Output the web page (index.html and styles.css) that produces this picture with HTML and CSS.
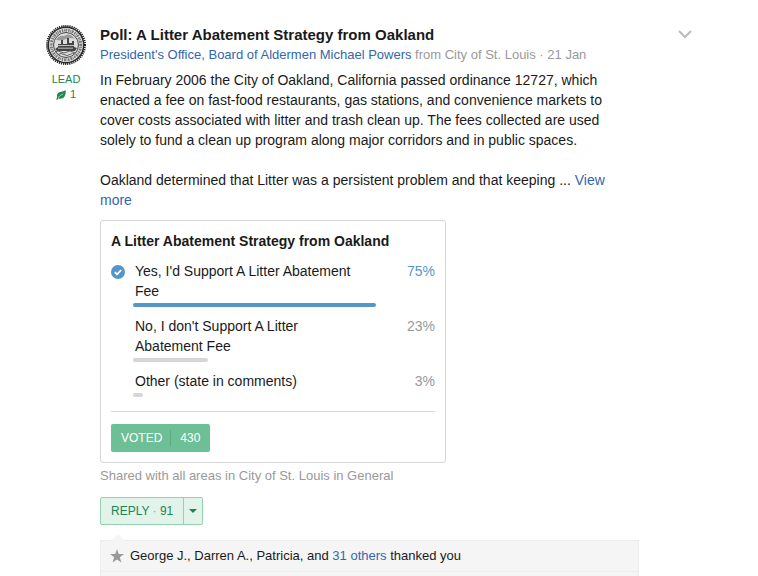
FILE: index.html
```html
<!DOCTYPE html>
<html lang="en">
<head>
<meta charset="utf-8">
<meta name="viewport" content="width=device-width, initial-scale=1">
<title>Poll: A Litter Abatement Strategy from Oakland</title>
<link rel="stylesheet" href="styles.css">
</head>
<body>
<article class="post">
  <aside class="author">
    <svg class="seal" viewBox="0 0 40 40" aria-hidden="true">
      <circle cx="20" cy="20" r="18.500" fill="#2a2a2a"/>
      <circle cx="20" cy="20" r="19" fill="none" stroke="#222" stroke-width="2" stroke-dasharray="1.2 .9"/>
      <circle cx="20" cy="20" r="17" fill="#eee"/>
      <circle cx="20" cy="20" r="14.800" fill="none" stroke="#777" stroke-width="3" stroke-dasharray="1.5 .7 .9 .6 1.900 .9"/>
      <circle cx="20" cy="20" r="12.500" fill="#dcdcdc" stroke="#444" stroke-width="1"/>
      <path d="M10 15q3-5 8-4 5-3 8 0l3 3q-5-2-9 0t-10 1z" fill="#999"/>
      <path d="M9 24l3-2v-3h3v-4h2v4h4v-6h2v5h3v-2h2v6l3 1-2 3H11z" fill="#444"/>
      <path d="M12 20.500h16M12 23.200h15" stroke="#ddd" stroke-width=".8"/>
      <path d="M9 27q3-2 6 0t6 0 6 0 4-1M12 29.500q3-2 6 0t6 0 4-1" fill="none" stroke="#666" stroke-width="1"/>
    </svg>
    <span class="role">LEAD</span>
    <span class="count">
      <svg class="leaf" viewBox="0 0 10 10" aria-hidden="true">
        <path d="M.5 9.500L2 8" stroke="#1f8452" stroke-width="1.2"/>
        <path d="M1.200 8Q0 3 4.200 1.900Q7.500 1.500 9.800.2Q10.200 8.400 4 8.700Q2.600 8.800 1.200 8z" fill="#1f8452"/>
        <path d="M2 7.800Q4 5.200 7.200 3.900" fill="none" stroke="#fff" stroke-width=".6"/>
      </svg>1</span>
  </aside>
  <div class="content">
    <header class="head">
      <div>
        <h1 class="title">Poll: A Litter Abatement Strategy from Oakland</h1>
        <p class="byline"><a href="#">President's Office, Board of Aldermen Michael Powers</a> from City of St. Louis · 21 Jan</p>
      </div>
      <button class="menu" type="button" aria-label="Post options">
        <svg viewBox="0 0 14 9" aria-hidden="true"><path d="M1 1l6 6 6-6" fill="none" stroke="#bbb" stroke-width="2"/></svg>
      </button>
    </header>
    <div class="text">
      <p>In February 2006 the City of Oakland, California passed ordinance 12727, which enacted a fee on fast-food restaurants, gas stations, and convenience markets to cover costs associated with litter and trash clean up. The fees collected are used solely to fund a clean up program along major corridors and in public spaces.</p>
      <p>Oakland determined that Litter was a persistent problem and that keeping ... <a href="#">View more</a></p>
    </div>
    <section class="poll">
      <h2 class="poll-title">A Litter Abatement Strategy from Oakland</h2>
      <ul class="options">
        <li class="option chosen">
          <svg class="check" viewBox="0 0 14 14" aria-hidden="true"><circle cx="7" cy="7" r="7" fill="#5596c8"/><path d="M3.800 7.200l2.200 2.200 4.200-4.400" fill="none" stroke="#fff" stroke-width="1.800"/></svg>
          <span class="label">Yes, I'd Support A Litter Abatement Fee</span>
          <span class="percent">75%</span>
          <span class="bar" style="--share: 75%"></span>
        </li>
        <li class="option">
          <span class="label">No, I don't Support A Litter Abatement Fee</span>
          <span class="percent">23%</span>
          <span class="bar" style="--share: 23%"></span>
        </li>
        <li class="option">
          <span class="label">Other (state in comments)</span>
          <span class="percent">3%</span>
          <span class="bar" style="--share: 3%"></span>
        </li>
      </ul>
      <div class="poll-foot">
        <button class="voted" type="button"><span>VOTED</span><span class="votes">430</span></button>
      </div>
    </section>
    <p class="shared">Shared with all areas in City of St. Louis in General</p>
    <div class="reply">
      <button class="reply-main" type="button">REPLY <span class="dot">·</span> 91</button>
      <button class="reply-more" type="button" aria-label="Reply options"><svg viewBox="0 0 8 4" aria-hidden="true"><path d="M0 0h8L4 4z" fill="#1f8452"/></svg></button>
    </div>
    <div class="thanks">
      <p class="thanks-row">
        <svg class="star" viewBox="0 0 14 14" aria-hidden="true"><path d="M7 0l1.700 5H14L9.800 8.200l1.600 5.300L7 10.400l-4.400 3.100 1.600-5.300L0 5h5.300z" fill="#999"/></svg>
        <span>George J., Darren A., Patricia, and <a href="#">31 others</a> thanked you</span>
      </p>
    </div>
  </div>
</article>
</body>
</html>
```
FILE: styles.css
```css
* { box-sizing: border-box; }

body {
  margin: 0;
  background: #fff;
  color: #1a1a1a;
  font: 14px/20px "Liberation Sans", Arial, sans-serif;
}

h1, h2, p, ul { margin: 0; padding: 0; }
ul { list-style: none; }
a { color: #3466ad; text-decoration: none; }
button { margin: 0; padding: 0; border: 0; background: none; font: inherit; cursor: pointer; }
svg { display: block; flex: none; }

.post {
  display: flex;
  gap: 14px;
  min-height: 100vh;
  padding: 25px 66px 0 46px;
}

.author {
  flex: none;
  display: flex;
  flex-direction: column;
  align-items: center;
  width: 40px;
  color: #1f8452;
  font-size: 11px;
  line-height: 15px;
}
.seal { width: 40px; height: 40px; margin-bottom: 7px; }
.count { display: flex; align-items: center; gap: 4px; }
.leaf { width: 10px; height: 10px; }

.content {
  flex: 1;
  min-width: 0;
  display: flex;
  flex-direction: column;
  align-items: flex-start;
}
.head { display: flex; justify-content: space-between; width: 100%; }
.title { font-size: 15px; line-height: 20px; }
.byline { margin-bottom: 5px; color: #999; font-size: 13px; }
.menu { align-self: flex-start; padding: 5px 0; }
.menu svg { width: 14px; height: 9px; }

.text { max-width: 539px; margin-bottom: 10px; }
.text p + p { margin-top: 20px; }

.poll {
  width: 346px;
  max-width: 100%;
  padding: 10px;
  border: 1px solid #d6d6d6;
  border-radius: 3px;
}
.poll-title { margin-bottom: 10px; font-size: 14px; line-height: 20px; }
.options { display: grid; gap: 9px; padding-bottom: 14px; }
.option {
  display: grid;
  grid-template-columns: 24px minmax(0, 228px) 1fr;
  row-gap: 2px;
}
.check { grid-area: 1 / 1; width: 14px; height: 14px; margin-top: 4px; }
.label { grid-area: 1 / 2; }
.percent { grid-area: 1 / 3; color: #999; text-align: right; }
.bar {
  grid-area: 2 / 1 / 3 / 4;
  width: var(--share);
  height: 4px;
  margin-left: 22px;
  border-radius: 2px;
  background: #d6d6d6;
}
.chosen .percent { color: #5596c8; }
.chosen .bar { background: #5596c8; }

.poll-foot { padding-top: 12px; border-top: 1px solid #d6d6d6; }
.voted {
  display: flex;
  align-items: center;
  height: 28px;
  padding: 0 10px;
  border-radius: 2px;
  background: #6dbf96;
  color: #fff;
  font-size: 12px;
  line-height: 16px;
}
.votes { margin-left: 8px; padding-left: 9px; border-left: 1px solid #5aa982; }

.shared { margin: 3px 0 11px; color: #999; font-size: 13px; }

.reply {
  display: flex;
  height: 28px;
  margin-bottom: 15px;
  border: 1px solid #93d3b2;
  border-radius: 2px;
  background: #e2f3ea;
}
.reply-main { padding: 0 10px; color: #1f8452; font-size: 12px; }
.dot { color: #6dbf96; }
.reply-more { padding: 0 5px; border-left: 1px solid #93d3b2; }
.reply-more svg { width: 8px; height: 4px; }

.thanks {
  position: relative;
  flex: 1;
  width: 100%;
  max-width: 539px;
  border: 1px solid #ececec;
  border-bottom: 0;
  background: #f5f5f5;
}
.thanks::before {
  content: "";
  position: absolute;
  top: -7px;
  left: 10px;
  border: 7px solid transparent;
  border-top: 0;
  border-bottom-color: #f5f5f5;
}
.thanks-row {
  display: flex;
  align-items: center;
  gap: 6px;
  padding: 5px 9px;
  border-bottom: 1px solid #ececec;
  font-size: 13px;
}
.star { width: 14px; height: 14px; }
```
